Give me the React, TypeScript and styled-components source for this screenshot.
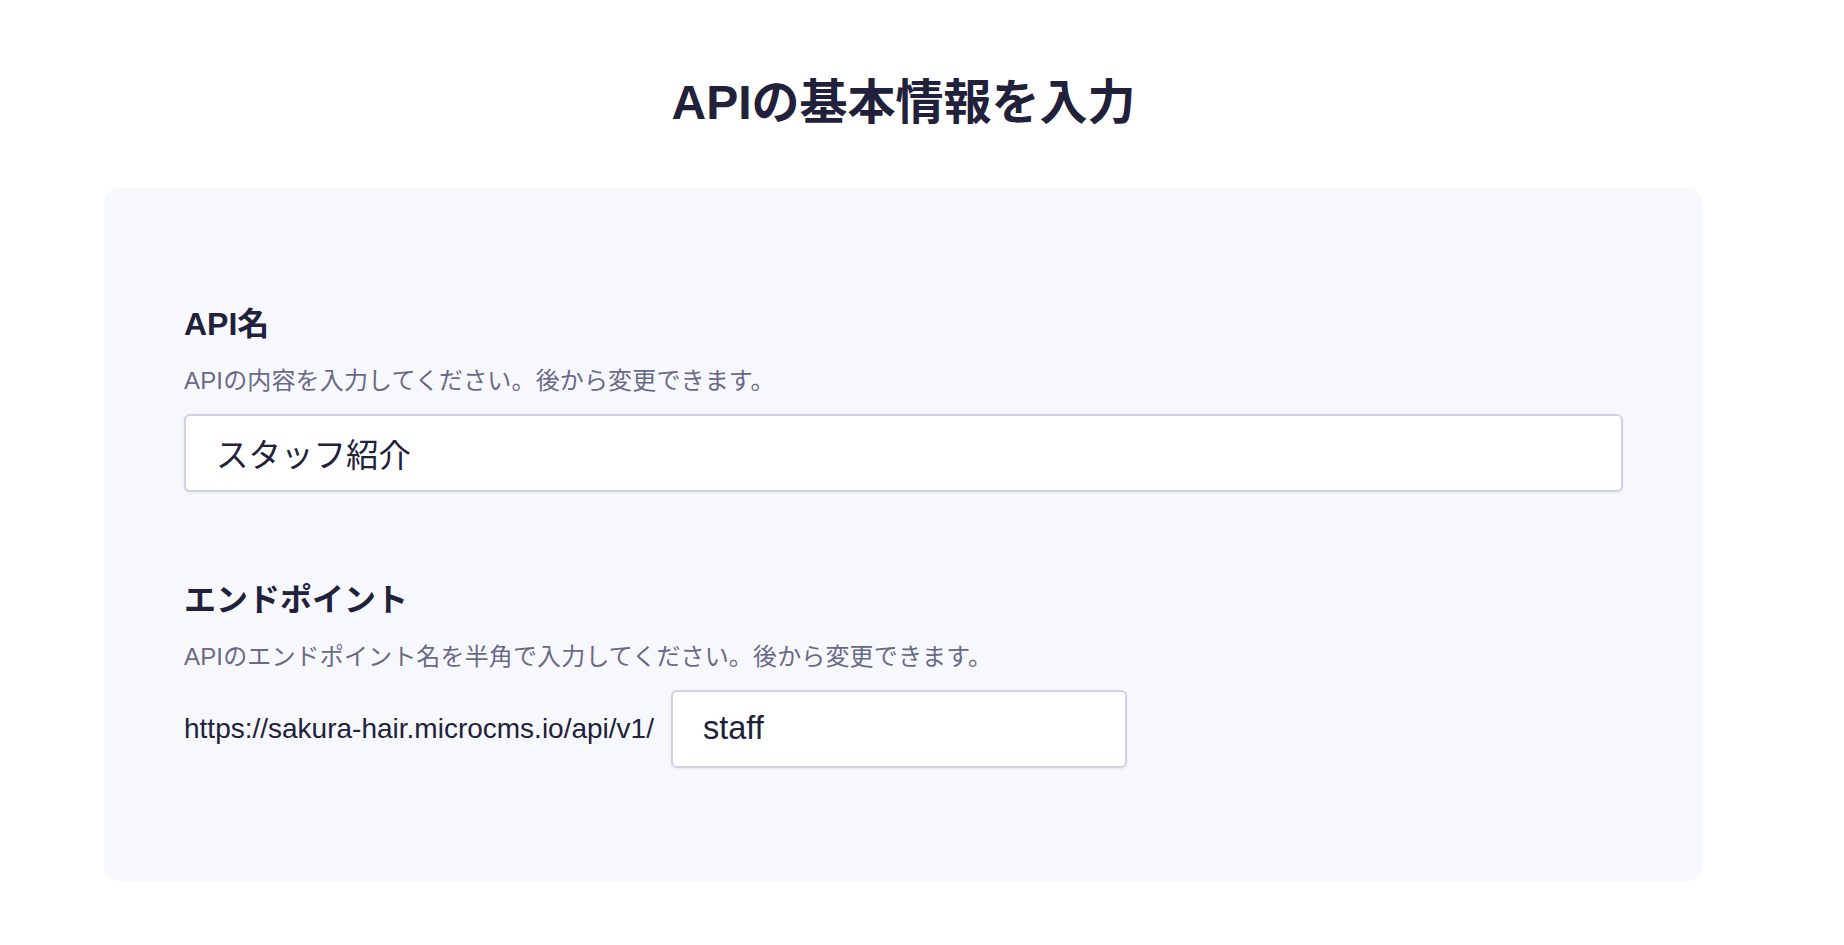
import styled, { createGlobalStyle } from 'styled-components'

const GlobalStyle = createGlobalStyle`
    html, body {
        margin: 0;
        padding: 0;
        background: #ffffff;
    }
    body {
        font-family: "Liberation Sans", "Noto Sans CJK JP", sans-serif;
        color: #21213b;
    }
`

const Page = styled.main`
    width: 1599px;
    margin-left: 104px;
    padding-top: 67px;
    padding-bottom: 64px;
`

const Title = styled.h1`
    margin: 0 0 49px;
    text-align: center;
    font-size: 48px;
    line-height: 72px;
    font-weight: 700;
    color: #21213b;
`

const Card = styled.section`
    background: #f7f8fc;
    border-radius: 16px;
    padding: 116px 80px 113px;
`

const Field = styled.div`
    & + & {
        margin-top: 88px;
    }
`

const Label = styled.h2`
    margin: 0;
    font-size: 32px;
    line-height: 40px;
    font-weight: 700;
    color: #21213b;
`

const Help = styled.p`
    margin: 20px 0 16px;
    font-size: 24px;
    letter-spacing: 0.15px;
    line-height: 34px;
    color: #6a6987;
`

const TextInput = styled.input<{ $width?: string }>`
    box-sizing: border-box;
    display: block;
    width: ${(p) => p.$width || '100%'};
    height: 78px;
    padding: 0 30px 2px;
    border: 2px solid #d2d1e2;
    border-radius: 6px;
    background: #ffffff;
    box-shadow: 0 1px 3px rgba(40, 40, 80, 0.08);
    font-family: "Liberation Sans", "Noto Sans CJK JP", sans-serif;
    font-size: 32.5px;
    color: #21213b;
    outline: none;
`

const EndpointRow = styled.div`
    display: flex;
    align-items: center;
    gap: 17px;
`

const BaseUrl = styled.span`
    font-size: 28px;
    line-height: 40px;
    color: #21213b;
    white-space: nowrap;
`

export default function App() {
    return (
        <>
            <GlobalStyle />
            <Page>
                <Title>APIの基本情報を入力</Title>
                <Card>
                    <Field>
                        <Label>API名</Label>
                        <Help>APIの内容を入力してください。後から変更できます。</Help>
                        <TextInput defaultValue="スタッフ紹介" />
                    </Field>
                    <Field>
                        <Label>エンドポイント</Label>
                        <Help>APIのエンドポイント名を半角で入力してください。後から変更できます。</Help>
                        <EndpointRow>
                            <BaseUrl>https://sakura-hair.microcms.io/api/v1/</BaseUrl>
                            <TextInput $width="456px" defaultValue="staff" />
                        </EndpointRow>
                    </Field>
                </Card>
            </Page>
        </>
    )
}
